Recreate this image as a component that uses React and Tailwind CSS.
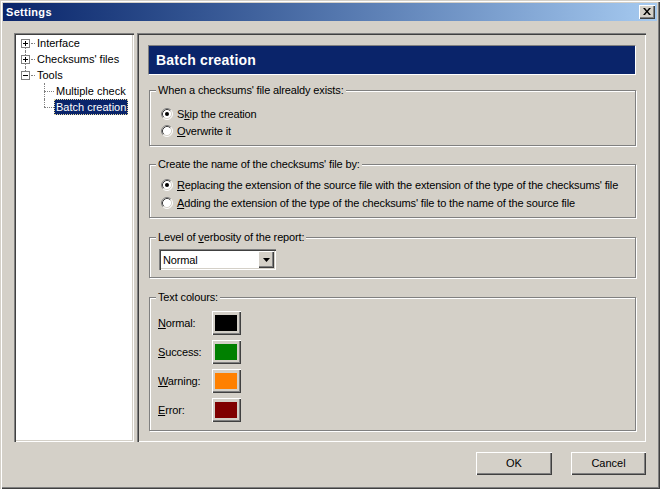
import React from 'react';

const raised = 'shadow-[inset_1px_1px_0_#ffffff,inset_-1px_-1px_0_#404040,inset_-2px_-2px_0_#808080]';
const sunken = 'shadow-[inset_1px_1px_0_#808080,inset_2px_2px_0_#404040,inset_-1px_-1px_0_#ffffff,inset_-2px_-2px_0_#d4d0c8]';

const Radio = ({ checked }) => (
  <svg width="12" height="12" viewBox="0 0 12 12" className="shrink-0">
    <circle cx="6" cy="6" r="5" fill="#ffffff" />
    <path d="M2.11 9.89A5.5 5.5 0 0 1 9.89 2.11" stroke="#808080" fill="none" />
    <path d="M2.82 9.18A4.5 4.5 0 0 1 9.18 2.82" stroke="#404040" fill="none" />
    <path d="M9.89 2.11A5.5 5.5 0 0 1 2.11 9.89" stroke="#ffffff" fill="none" />
    <path d="M9.18 2.82A4.5 4.5 0 0 1 2.82 9.18" stroke="#d4d0c8" fill="none" />
    {checked && <circle cx="6" cy="6" r="2" fill="#000000" />}
  </svg>
);

const Group = ({ label, className, children }) => (
  <div className={`relative ml-[1px] border border-[#808080] shadow-[inset_1px_1px_0_#ffffff,1px_1px_0_#ffffff] ${className}`}>
    <span className="absolute left-[6px] -top-[8px] px-[2px] bg-[#d4d0c8] leading-[14px]">{label}</span>
    {children}
  </div>
);

const Option = ({ checked, children }) => (
  <div className="flex items-center gap-[4px] h-[17px]">
    <Radio checked={checked} />
    <span className="leading-[14px]">{children}</span>
  </div>
);

const TreeBox = ({ open, top, bottom }) => (
  <div className="flex flex-col items-center w-[9px] h-[16px] shrink-0">
    <div className={`h-[4px] w-0 ${top ? 'border-l border-dotted border-[#808080]' : ''}`} />
    <div className="relative w-[9px] h-[9px] border border-[#808080] bg-white">
      <div className="absolute left-[1px] top-[3px] w-[5px] h-[1px] bg-black" />
      {!open && <div className="absolute left-[3px] top-[1px] w-[1px] h-[5px] bg-black" />}
    </div>
    <div className={`h-[3px] w-0 ${bottom ? 'border-l border-dotted border-[#808080]' : ''}`} />
  </div>
);

const RootRow = ({ label, open, top, bottom }) => (
  <div className="flex items-center h-[16px] pl-[5px]">
    <TreeBox open={open} top={top} bottom={bottom} />
    <div className="w-[4px] ml-[1px] border-t border-dotted border-[#808080]" />
    <span className="px-[2px] leading-[14px] whitespace-nowrap">{label}</span>
  </div>
);

const ChildRow = ({ label, last, selected }) => (
  <div className="flex items-stretch h-[16px] pl-[28px]">
    <div className="relative w-[10px] shrink-0">
      <div className={`absolute left-0 top-0 w-0 border-l border-dotted border-[#808080] ${last ? 'h-[8px]' : 'h-[16px]'}`} />
      <div className="absolute left-0 top-[8px] w-[10px] border-t border-dotted border-[#808080]" />
    </div>
    <span
      className={`px-[1px] leading-[14px] whitespace-nowrap flex items-center ${
        selected ? 'bg-[#0a246a] text-white outline outline-1 outline-dotted outline-[#e8dca0] -outline-offset-1' : ''
      }`}
    >
      <span className="px-[1px]">{label}</span>
    </span>
  </div>
);

const ColourRow = ({ label, rest, colour }) => (
  <div className="flex items-center h-[24px]">
    <span className="w-[54px] leading-[14px]">
      <u>{label}</u>
      {rest}
    </span>
    <div className={`w-[29px] h-[24px] bg-[#d4d0c8] flex items-center justify-center ${raised}`}>
      <div className={`w-[22px] h-[16px] -mt-[1px] -ml-[1px] ${colour}`} />
    </div>
  </div>
);

export default function App() {
  return (
    <div
      className="w-[660px] h-[489px] bg-[#d4d0c8] p-[3px] flex flex-col text-[11px] text-black shadow-[inset_1px_1px_0_#d4d0c8,inset_2px_2px_0_#ffffff,inset_-1px_-1px_0_#404040,inset_-2px_-2px_0_#808080]"
      style={{ fontFamily: '"Liberation Sans", Arial, sans-serif' }}
    >
      {/* title bar */}
      <div className="h-[18px] flex items-center justify-between bg-gradient-to-r from-[#0a246a] to-[#a6caf0] pl-[3px] pr-[2px]">
        <span className="font-bold text-white text-[11px] tracking-[0.3px]">Settings</span>
        <div className={`w-[16px] h-[14px] bg-[#d4d0c8] flex items-center justify-center ${raised}`}>
          <svg width="8" height="7" viewBox="0 0 8 7" className="-mt-[1px]">
            <path d="M0 0h2l2 2.5L6 0h2L5 3.5 8 7H6L4 4.5 2 7H0l3-3.5z" fill="#000" />
          </svg>
        </div>
      </div>

      <div className="flex flex-col pl-[11px] pr-[11px] pt-[12px]">
        <div className="flex h-[409px]">
          {/* tree */}
          <div className={`w-[120px] bg-white p-[2px] ${sunken}`}>
            <RootRow label="Interface" bottom />
            <RootRow label="Checksums' files" top bottom />
            <RootRow label="Tools" open top />
            <ChildRow label="Multiple check" />
            <ChildRow label="Batch creation" last selected />
          </div>

          {/* panel */}
          <div className={`ml-[3px] w-[509px] pl-[11px] pr-[10px] pt-[12px] tracking-[-0.14px] ${sunken}`}>
            <div className="h-[30px] bg-[#0a246a] border-t border-l border-[#808080] border-b border-r border-b-white border-r-white flex items-center pl-[7px]">
              <span className="text-white font-bold text-[14px] tracking-[0.2px]">Batch creation</span>
            </div>

            <Group label="When a checksums' file alrealdy exists:" className="mt-[15px] h-[56px] pt-[14px] pl-[11px]">
              <Option checked>
                S<u>k</u>ip the creation
              </Option>
              <Option>
                <u>O</u>verwrite it
              </Option>
            </Group>

            <Group label="Create the name of the checksums' file by:" className="mt-[18px] h-[54px] pt-[11px] pl-[11px]">
              <div className="flex flex-col gap-[1px]">
                <Option checked>
                  <u>R</u>eplacing the extension of the source file with the extension of the type of the checksums' file
                </Option>
                <Option>
                  <u>A</u>dding the extension of the type of the checksums' file to the name of the source file
                </Option>
              </div>
            </Group>

            <Group
              label={
                <>
                  Level of <u>v</u>erbosity of the report:
                </>
              }
              className="mt-[19px] h-[41px] pt-[11px] pl-[9px]"
            >
              <div className={`w-[117px] h-[21px] bg-white flex items-center justify-between p-[2px] ${sunken}`}>
                <span className="pl-[2px] leading-[14px]">Normal</span>
                <div className={`w-[16px] h-[17px] bg-[#d4d0c8] flex items-center justify-center ${raised}`}>
                  <svg width="7" height="4" viewBox="0 0 7 4">
                    <path d="M0 0h7L3.5 4z" fill="#000" />
                  </svg>
                </div>
              </div>
            </Group>

            <Group label="Text colours:" className="mt-[19px] h-[134px] pt-[13px] pl-[8px]">
              <div className="flex flex-col gap-[5px]">
                <ColourRow label="N" rest="ormal:" colour="bg-black" />
                <ColourRow label="S" rest="uccess:" colour="bg-[#008000]" />
                <ColourRow label="W" rest="arning:" colour="bg-[#ff8000]" />
                <ColourRow label="E" rest="rror:" colour="bg-[#800000]" />
              </div>
            </Group>
          </div>
        </div>

        {/* buttons */}
        <div className="flex justify-end gap-[19px] mt-[10px]">
          <button className={`w-[76px] h-[23px] bg-[#d4d0c8] text-[11px] ${raised}`}>OK</button>
          <button className={`w-[75px] h-[23px] bg-[#d4d0c8] text-[11px] ${raised}`}>Cancel</button>
        </div>
      </div>
    </div>
  );
}
